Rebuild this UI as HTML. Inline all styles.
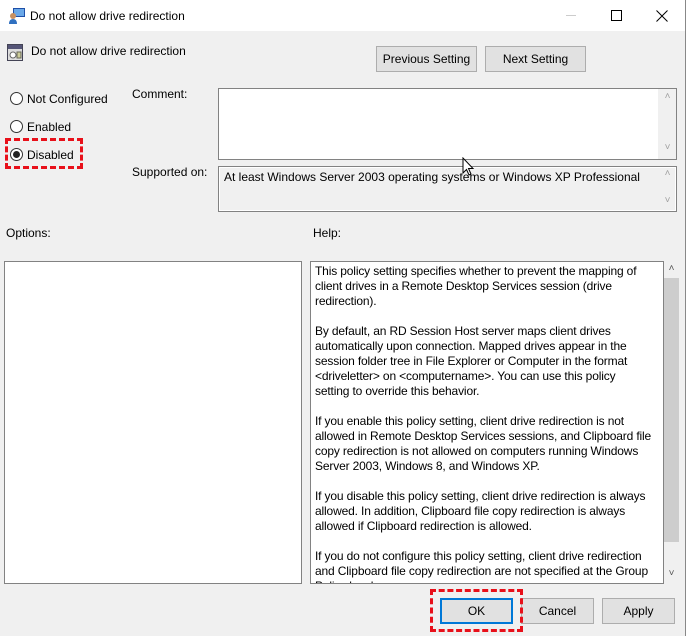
<!DOCTYPE html>
<html><head><style>
*{box-sizing:border-box;margin:0;padding:0}
body{width:686px;height:636px;background:#f0f0f0;font-family:"Liberation Sans",sans-serif;font-size:12px;color:#000;position:relative;overflow:hidden}
.a{position:absolute;white-space:nowrap}
.btn{position:absolute;background:#e1e1e1;border:1px solid #adadad;text-align:center;line-height:24px}
.rad{position:absolute;width:13px;height:13px;border:1px solid #333;border-radius:50%;background:#fff}
.sb{position:absolute;color:#a0a0a0;font-size:10px;text-align:center;width:17px}
</style></head><body>
<div class="a" style="left:0;top:0;width:686px;height:31px;background:#fff"></div>
<div class="a" style="left:685px;top:0;width:1px;height:636px;background:#888"></div>
<svg class="a" style="left:8px;top:7px" width="18" height="18"><rect x="5" y="1" width="12" height="9" fill="#1e4fa8"/><rect x="6" y="2" width="10" height="7" fill="#6aa8e8"/><circle cx="5" cy="9" r="3" fill="#c89060"/><path d="M1 17 Q1 12 5 12 Q9 12 9 17Z" fill="#3070c0"/></svg>
<div class="a" style="left:30px;top:9px">Do not allow drive redirection</div>
<div class="a" style="left:566px;top:15px;width:10px;height:1px;background:#ccc"></div>
<div class="a" style="left:611px;top:10px;width:11px;height:11px;border:1px solid #000"></div>
<svg class="a" style="left:656px;top:10px" width="12" height="12"><path d="M0.5 0.5L11.5 11.5M11.5 0.5L0.5 11.5" stroke="#000" stroke-width="1"/></svg>
<svg class="a" style="left:7px;top:44px" width="16" height="17"><rect x="0.5" y="0.5" width="15" height="16" fill="#ddd" stroke="#445"/><rect x="1" y="1" width="14" height="4" fill="#557"/><circle cx="6" cy="11" r="3" fill="#fff" stroke="#666"/><rect x="10" y="8" width="4" height="6" fill="#cc9" stroke="#665"/></svg>
<div class="a" style="left:31px;top:44px">Do not allow drive redirection</div>
<div class="btn" style="left:376px;top:46px;width:101px;height:26px">Previous Setting</div>
<div class="btn" style="left:485px;top:46px;width:101px;height:26px">Next Setting</div>
<div class="rad" style="left:10px;top:92px"></div><div class="a" style="left:27px;top:92px">Not Configured</div>
<div class="rad" style="left:10px;top:120px"></div><div class="a" style="left:27px;top:120px">Enabled</div>
<div class="rad" style="left:10px;top:148px"></div><div class="a" style="left:13px;top:151px;width:7px;height:7px;border-radius:50%;background:#222"></div><div class="a" style="left:27px;top:148px">Disabled</div>
<div class="a" style="left:5px;top:138px;width:78px;height:31px;border:3px dashed #e8101a"></div>
<div class="a" style="left:132px;top:87px">Comment:</div>
<div class="a" style="left:218px;top:88px;width:459px;height:72px;background:#fff;border:1px solid #828282"></div>
<div class="a" style="left:658px;top:89px;width:18px;height:70px;background:#f0f0f0"></div>
<div class="sb" style="left:659px;top:91px">˄</div><div class="sb" style="left:659px;top:142px">˅</div>
<div class="a" style="left:132px;top:165px">Supported on:</div>
<div class="a" style="left:218px;top:166px;width:459px;height:46px;border:1px solid #828282;box-shadow:inset 0 0 0 1px #fff"></div>
<div class="a" style="left:224px;top:170px">At least Windows Server 2003 operating systems or Windows XP Professional</div>
<div class="sb" style="left:659px;top:168px">˄</div><div class="sb" style="left:659px;top:195px">˅</div>
<svg class="a" style="left:462px;top:157px" width="14" height="20"><path d="M1 1V16L4.5 12.5L7 18L9 17L6.5 11.5H11Z" fill="#fff" stroke="#000" stroke-width="1"/></svg>
<div class="a" style="left:6px;top:226px">Options:</div>
<div class="a" style="left:313px;top:226px">Help:</div>
<div class="a" style="left:4px;top:261px;width:298px;height:323px;background:#fff;border:1px solid #828282"></div>
<div class="a" style="left:310px;top:261px;width:354px;height:323px;background:#fff;border:1px solid #828282;padding:2px 3px 2px 4px;line-height:15px;overflow:hidden;letter-spacing:-0.15px">This policy setting specifies whether to prevent the mapping of<br>client drives in a Remote Desktop Services session (drive<br>redirection).<br><br>By default, an RD Session Host server maps client drives<br>automatically upon connection. Mapped drives appear in the<br>session folder tree in File Explorer or Computer in the format<br>&lt;driveletter&gt; on &lt;computername&gt;. You can use this policy<br>setting to override this behavior.<br><br>If you enable this policy setting, client drive redirection is not<br>allowed in Remote Desktop Services sessions, and Clipboard file<br>copy redirection is not allowed on computers running Windows<br>Server 2003, Windows 8, and Windows XP.<br><br>If you disable this policy setting, client drive redirection is always<br>allowed. In addition, Clipboard file copy redirection is always<br>allowed if Clipboard redirection is allowed.<br><br>If you do not configure this policy setting, client drive redirection<br>and Clipboard file copy redirection are not specified at the Group<br>Policy level.</div>
<div class="a" style="left:664px;top:278px;width:15px;height:264px;background:#cdcdcd"></div>
<div class="sb" style="left:663px;top:263px;color:#555">˄</div><div class="sb" style="left:663px;top:568px;color:#555">˅</div>
<div class="btn" style="left:440px;top:598px;width:73px;height:26px;border:2px solid #0078d7;line-height:23px">OK</div>
<div class="btn" style="left:521px;top:598px;width:73px;height:26px">Cancel</div>
<div class="btn" style="left:602px;top:598px;width:73px;height:26px">Apply</div>
<div class="a" style="left:430px;top:589px;width:93px;height:43px;border:3px dashed #e8101a"></div>
</body></html>
